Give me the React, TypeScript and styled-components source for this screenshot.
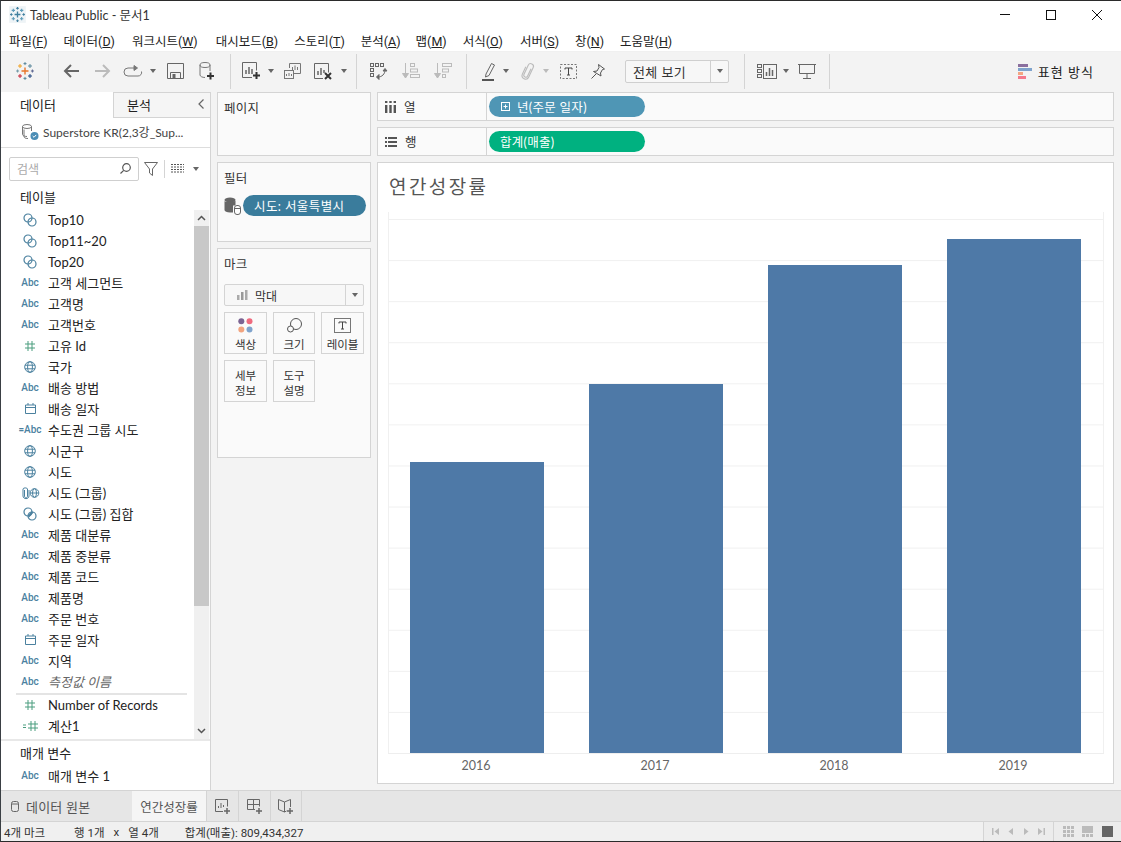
import React from "react";
import styled, { createGlobalStyle } from "styled-components";

const Global = createGlobalStyle`
  html, body { margin: 0; padding: 0; background: #f3f3f3; overflow: hidden; }
  body { font-family: Lato, "Noto Sans CJK KR", sans-serif; font-size: 13px; color: #222; }
  * { box-sizing: border-box; }
  #root { height: 100vh; }
`;

const Win = styled.div`
  height: 842px; width: 1121px; display: flex; flex-direction: column;
  border-top: 1px solid #2b2b2b; border-left: 1px solid #3a3f44; border-bottom: 1px solid #2b2b2b;
  background: #f3f3f3; overflow: hidden;
`;
const TitleBar = styled.div`
  height: 27px; flex: none; background: #fff; display: flex; align-items: center; padding-left: 9px; color: #333; font-size: 12.5px;
`;
const TitleText = styled.span` margin-left: 5px; `;
const WinButtons = styled.div` margin-left: auto; margin-right: 1px; display: flex; `;
const WinButton = styled.span` width: 46px; height: 27px; display: flex; align-items: center; justify-content: center; `;
const MenuBar = styled.div`
  height: 23px; flex: none; background: #fff; display: flex; align-items: center; font-family: Roboto, "Noto Sans CJK KR", sans-serif; font-size: 12.5px; color: #222; padding-top: 1px;
`;
const MenuItem = styled.span<{ $x: number }>` margin-left: ${p => p.$x}px; white-space: nowrap; `;
const ToolBar = styled.div`
  height: 39px; flex: none; background: #f3f3f3; display: flex; align-items: center; border-top: 1px solid #f0f0f0;
`;
const Tool = styled.span<{ $ml: number; $w: number }>`
  margin-left: ${p => p.$ml}px; width: ${p => p.$w}px; height: 24px; flex: none; display: flex; align-items: center; justify-content: center; color: #666;
`;
const ToolSep = styled.span<{ $ml: number }>`
  margin-left: ${p => p.$ml}px; width: 1px; height: 35px; background: #d4d4d4; flex: none;
`;
const Caret = styled.span<{ $ml?: number; $c?: string }>`
  margin-left: ${p => p.$ml ?? 0}px; flex: none; width: 0; height: 0; border-left: 3px solid transparent; border-right: 3px solid transparent;
  border-top: 4px solid ${p => p.$c ?? "#666"};
`;
const Combo = styled.div<{ $ml: number }>`
  margin-left: ${p => p.$ml}px; width: 104px; height: 23px; flex: none; background: #f7f7f7; border: 1px solid #cfcfcf; border-radius: 2px;
  display: flex; align-items: center; font-size: 13px; color: #333;
`;
const ComboText = styled.span` flex: 1; padding-left: 7px; letter-spacing: .4px; `;
const ComboArrow = styled.span`
  width: 18px; height: 100%; border-left: 1px solid #cfcfcf; display: flex; align-items: center; justify-content: center;
`;
const ShowMe = styled.div`
  margin-left: auto; margin-right: 27px; display: flex; align-items: center; gap: 6px; font-size: 13px; color: #222; letter-spacing: 1px;
`;

const Main = styled.div` height: 700px; flex: none; display: flex; min-height: 0; padding-top: 1px; `;
const DataPanel = styled.div`
  width: 210px; flex: none; background: #fff; border-right: 1px solid #d4d4d4; display: flex; flex-direction: column; margin-top: 1px;
`;
const PanelTabs = styled.div` height: 26px; flex: none; display: flex; font-size: 13px; `;
const DataTab = styled.div` width: 112px; padding: 0 0 1px 19px; display: flex; align-items: center; `;
const AnalysisTab = styled.div`
  flex: 1; background: #f5f5f5; border: 1px solid #d4d4d4; border-right: 0; padding: 0 6px 2px 13px; display: flex; align-items: center; justify-content: space-between;
`;
const SourceRow = styled.div`
  height: 30px; flex: none; border-bottom: 1px solid #ddd; display: flex; align-items: center; padding: 0 0 2px 20px; gap: 4px; color: #444; font-size: 12px; 
`;
const SearchRow = styled.div` height: 39px; flex: none; display: flex; align-items: center; padding: 2px 0 0 8px; `;
const SearchBox = styled.div`
  width: 130px; height: 24px; border: 1px solid #cfcfcf; border-radius: 2px; display: flex; align-items: center; justify-content: space-between;
  padding: 0 7px; color: #aaa; font-size: 12px;
`;
const SearchDivider = styled.span` width: 1px; height: 18px; background: #d4d4d4; margin: 0 6px; `;
const SectionHead = styled.div<{ $pb: number }>` height: 23px; flex: none; padding: 0 0 ${p => p.$pb}px 19px; font-size: 13px; color: #222; display: flex; align-items: center; `;
const ListWrap = styled.div` height: 531px; flex: none; display: flex; border-bottom: 2px solid #e8e8e8; `;
const List = styled.div` flex: 1; min-width: 0; `;
const Row = styled.div<{ $italic?: boolean }>`
  height: 21px; padding-bottom: 2px; display: flex; align-items: center; white-space: nowrap; font-size: 13px; color: ${p => (p.$italic ? "#666" : "#222")};
  font-style: ${p => (p.$italic ? "italic" : "normal")};
`;
const RowIcon = styled.span<{ $c?: string }>`
  width: 47px; flex: none; display: flex; align-items: center; justify-content: center; padding-left: 14px; padding-right: 3px; font-size: 10px; font-style: normal;
  color: ${p => p.$c ?? "#4b819f"}; font-family: Roboto, sans-serif; font-weight: 500;
`;
const ListDivider = styled.div` height: 2px; background: #e4e4e4; margin-left: 15px; margin-right: 7px; `;
const Scrollbar = styled.div` width: 16px; flex: none; background: #f0f0f0; display: flex; flex-direction: column; border-right: 1px solid #fafafa; `;
const ScrollBtn = styled.div` height: 16px; flex: none; display: flex; align-items: center; justify-content: center; color: #555; `;
const ScrollThumb = styled.div` height: 380px; background: #c8c8c8; flex: none; `;
const ScrollRest = styled.div` flex: 1; `;
const ParamRow = styled.div` padding-top: 2px; `;

const Middle = styled.div` width: 154px; margin-left: 6px; flex: none; display: flex; flex-direction: column; gap: 6px; padding-top: 1px; `;
const Card = styled.div<{ $h: number }>`
  height: ${p => p.$h}px; flex: none; background: #fafafa; border: 1px solid #d4d4d4; padding: 7px 6px; display: flex; flex-direction: column; font-size: 12.5px; color: #333;
`;
const CardTitle = styled.div` height: 18px; line-height: 18px; letter-spacing: .3px; `;
const FilterRow = styled.div` display: flex; align-items: center; gap: 2px; margin-top: 7px; `;
const FilterPill = styled.div`
  width: 123px; height: 21px; flex: none; border-radius: 11px; background: #3a7c9c; color: #fff; font-size: 12.5px; padding-left: 11px; display: flex; align-items: center; letter-spacing: .4px;
`;
const MarkSelect = styled.div`
  margin-top: 10px; width: 140px; height: 22px; border: 1px solid #d4d4d4; border-radius: 2px; background: #f7f7f7; display: flex; align-items: center; font-size: 12px;
`;
const MarkSelectLabel = styled.div` flex: 1; display: flex; align-items: center; gap: 7px; padding-left: 12px; `;
const MarkSelectArrow = styled.div` width: 18px; height: 100%; border-left: 1px solid #d4d4d4; display: flex; align-items: center; justify-content: center; `;
const MarkGrid = styled.div` display: grid; grid-template-columns: 43px 42px 43px; gap: 6px; margin-top: 6px; `;
const MarkBtn = styled.div`
  height: 42px; padding-top: 3px; background: #fafafa; border: 1px solid #d4d4d4; display: flex; flex-direction: column; align-items: center; justify-content: center; font-size: 11.5px; line-height: 15px; color: #333; text-align: center;
`;
const MarkIcon = styled.span` height: 18px; display: flex; align-items: center; justify-content: center; margin: -1px 0 3px; `;

const Right = styled.div` width: 737px; margin-left: 6px; flex: none; display: flex; flex-direction: column; padding-top: 1px; `;
const Shelf = styled.div`
  height: 29px; flex: none; background: #fafafa; border: 1px solid #d4d4d4; display: flex; margin-bottom: 6px;
`;
const ShelfLabel = styled.div`
  width: 109px; flex: none; border-right: 1px solid #d4d4d4; display: flex; align-items: center; gap: 8px; padding-left: 7px; font-size: 12.5px; color: #333;
`;
const Pill = styled.div<{ $bg: string; $pl: number }>`
  margin: 3px 0 0 2px; width: 156px; height: 21px; border-radius: 11px; background: ${p => p.$bg}; color: #fff; display: flex; align-items: center; gap: 7px;
  padding-left: ${p => p.$pl}px; font-size: 12.5px; letter-spacing: .3px;
`;
const ChartCard = styled.div`
  height: 622px; flex: none; background: #fff; border: 1px solid #d4d4d4; display: flex; flex-direction: column; padding: 0 9px 0 10px;
`;
const ChartTitle = styled.div` height: 49px; padding: 11px 0 0 1px; font-size: 19px; line-height: 26px; letter-spacing: 2.4px; color: #555; `;
const Plot = styled.div`
  height: 542px; flex: none; display: flex; border-bottom: 1px solid #eee; box-shadow: inset 1px 0 #f0f0f0, inset -1px 0 #f0f0f0;
  background-image: linear-gradient(to bottom, #f0f0f0 0, #f0f0f0 1px, transparent 1px);
  background-size: 100% 41.08px;
  background-position: 0 7px;
`;
const BarSlot = styled.div` flex: 1; padding-right: 2px; display: flex; align-items: flex-end; justify-content: center; `;
const Bar = styled.div<{ $h: number }>` width: 134px; height: ${p => p.$h}px; background: #4e79a7; `;
const Axis = styled.div` display: flex; height: 20px; `;
const AxisLabel = styled.div` flex: 1; padding-right: 3px; text-align: center; color: #666; font-size: 12.5px; line-height: 23px; `;

const TabBar = styled.div` height: 31px; flex: none; background: #e6e6e6; border-top: 1px solid #d4d4d4; display: flex; color: #555; font-size: 13px; `;
const SourceTab = styled.div` width: 131px; display: flex; align-items: center; gap: 7px; padding-left: 10px; letter-spacing: .2px; `;
const SheetTab = styled.div` width: 74px; background: #f5f5f5; display: flex; align-items: center; justify-content: center; font-size: 12.5px; `;
const AddTab = styled.div` width: 32px; border-left: 1px solid #d4d4d4; display: flex; align-items: center; justify-content: center; color: #666; &:last-child { border-right: 1px solid #d4d4d4; } `;
const StatusBar = styled.div` flex: 1; min-height: 0; background: #f0f0f0; border-top: 1px solid #d4d4d4; display: flex; align-items: center; font-family: Roboto, "Noto Sans CJK KR", sans-serif; font-size: 11.5px; color: #333; `;
const StatusItem = styled.span<{ $ml: number }>` margin-left: ${p => p.$ml}px; white-space: nowrap; `;
const NavGroup = styled.div<{ $ml?: boolean; $w: number }>`
  ${p => (p.$ml ? "margin-left: auto;" : "")} width: ${p => p.$w}px; height: 100%; border-left: 1px solid #d4d4d4; display: flex; align-items: center; justify-content: space-evenly; background: #ececec;
`;

const Svg = styled.svg` display: block; flex: none; overflow: visible; `;

const Cross: React.FC<{ x: number; y: number; s: number; c: string; w?: number }> = ({ x, y, s, c, w = 1 }) => (
  <path d={`M${x - s} ${y}H${x + s}M${x} ${y - s}V${y + s}`} stroke={c} strokeWidth={w} fill="none" />
);
const TableauLogo = () => (
  <Svg width="18" height="18" viewBox="0 0 18 18">
    <Cross x={9} y={9} s={3.5} c="#e8762b" w={1.4} />
    <Cross x={4} y={4} s={2} c="#f0a020" />
    <Cross x={14} y={4} s={2} c="#5b879b" />
    <Cross x={4} y={14} s={2} c="#c72035" />
    <Cross x={14} y={14} s={2} c="#1f457e" />
    <Cross x={9} y={1.6} s={1.5} c="#5b879b" />
    <Cross x={9} y={16.4} s={1.5} c="#59879b" />
    <Cross x={1.6} y={9} s={1.5} c="#7099a6" />
    <Cross x={16.4} y={9} s={1.5} c="#5b6591" />
  </Svg>
);
const TitleLogo = () => (
  <Svg width="15" height="15" viewBox="0 0 18 18">
    <rect x="-1" y="-1" width="20" height="20" fill="#eef3f6" />
    <Cross x={9} y={9} s={3.5} c="#3f7f9e" w={1.6} />
    <Cross x={4} y={4} s={2} c="#5b9ab8" w={1.3} />
    <Cross x={14} y={4} s={2} c="#5b9ab8" w={1.3} />
    <Cross x={4} y={14} s={2} c="#5b9ab8" w={1.3} />
    <Cross x={14} y={14} s={2} c="#5b9ab8" w={1.3} />
    <Cross x={9} y={1.6} s={1.5} c="#3f7f9e" w={1.3} />
    <Cross x={9} y={16.4} s={1.5} c="#3f7f9e" w={1.3} />
    <Cross x={1.6} y={9} s={1.5} c="#3f7f9e" w={1.3} />
    <Cross x={16.4} y={9} s={1.5} c="#3f7f9e" w={1.3} />
  </Svg>
);
const Plus = ({ x, y }: { x: number; y: number }) => (
  <path d={`M${x - 3.5} ${y}H${x + 3.5}M${x} ${y - 3.5}V${y + 3.5}`} stroke="#333" strokeWidth="2" fill="none" />
);
const ArrowLeft = ({ c }: { c: string }) => (
  <Svg width="16" height="14" viewBox="0 0 16 14" fill="none" stroke={c} strokeWidth="2"><path d="M16 7H2M8 1L2 7l6 6" /></Svg>
);
const ArrowRight = ({ c }: { c: string }) => (
  <Svg width="16" height="14" viewBox="0 0 16 14" fill="none" stroke={c} strokeWidth="2"><path d="M0 7h14M8 1l6 6-6 6" /></Svg>
);
const Redo = () => (
  <Svg width="18" height="12" viewBox="0 0 18 12" fill="none" stroke="#777" strokeWidth="1"><path d="M11 3H4a3.5 3.5 0 0 0 0 8h10a3.5 3.5 0 0 0 3.5-4.5" /><path d="M10 0.500l3.500 2.500-3.500 2.500z" fill="#777" /></Svg>
);
const Save = () => (
  <Svg width="17" height="16" viewBox="0 0 17 16" fill="none" stroke="#666" strokeWidth="1"><path d="M.5.500h16v15H.5zM3.500 15V9.500h10V15" /><rect x="5.500" y="11" width="3" height="4" fill="#666" stroke="none" /></Svg>
);
const NewData = () => (
  <Svg width="16" height="18" viewBox="0 0 16 18" fill="none" stroke="#777" strokeWidth="1">
    <ellipse cx="6" cy="3" rx="5" ry="2.500" /><path d="M1 3v10c0 1.400 2.500 2.500 5 2.500M11 3v6" /><Plus x={11.5} y={14} />
  </Svg>
);
const NewSheet = () => (
  <Svg width="19" height="18" viewBox="0 0 19 18" fill="none" stroke="#666" strokeWidth="1">
    <path d="M10 15.500H.5V.5h14v8" /><path d="M4 12V8M7 12V5M10 12V7" strokeWidth="1.500" /><Plus x={14.500} y={13.500} />
  </Svg>
);
const Duplicate = () => (
  <Svg width="17" height="16" viewBox="0 0 17 16" fill="none" stroke="#777" strokeWidth="1">
    <path d="M5.500 5V.5h11v10H10" /><rect x=".5" y="7.500" width="9" height="8" /><path d="M8.500 7V4M11 7V2.500M13.500 7V4M2.500 13v-2M5 13v-3M7.500 13v-2" />
  </Svg>
);
const ClearSheet = () => (
  <Svg width="20" height="17" viewBox="0 0 20 17" fill="none" stroke="#666" strokeWidth="1">
    <path d="M9 15.500H.5V.5h14v9" /><path d="M4 12V8M7 12V5M10 10V7" strokeWidth="1.500" /><path d="M11 10l6 6M17 10l-6 6" stroke="#333" strokeWidth="2" />
  </Svg>
);
const Swap = () => (
  <Svg width="18" height="17" viewBox="0 0 18 17" fill="none" stroke="#666" strokeWidth="1">
    <rect x=".5" y=".5" width="3" height="3" /><rect x="5.500" y=".5" width="3" height="3" /><rect x="10.500" y=".5" width="3" height="3" />
    <rect x=".5" y="5.500" width="3" height="3" /><rect x=".5" y="10.500" width="3" height="3" />
    <path d="M15 7c0 4-3 7-7 7" /><path d="M13 8l2-2.500 2 2.500z" fill="#666" /><path d="M9 11.500L6.500 14 9 16.500z" fill="#666" />
  </Svg>
);
const SortAsc = ({ flip }: { flip?: boolean }) => (
  <Svg width="18" height="16" viewBox="0 0 18 16" fill="none" stroke="#bbb" strokeWidth="1">
    <path d="M3.500 0v11" /><path d="M.5 10.500h6l-3 4.500z" fill="#bbb" />
    {flip ? (
      <><rect x="8.500" y=".5" width="9" height="3" /><rect x="8.500" y="6" width="6" height="3" /><rect x="8.500" y="11.500" width="3" height="3" /></>
    ) : (
      <><rect x="8.500" y=".5" width="4" height="3" /><rect x="8.500" y="6" width="7" height="3" /><rect x="8.500" y="11.500" width="9" height="3" /></>
    )}
  </Svg>
);
const Highlight = () => (
  <Svg width="13" height="19" viewBox="0 0 13 19" fill="none" stroke="#666" strokeWidth="1">
    <path d="M4 12L9.500 1.500l3 1.500L7 13.500 3.500 15z" /><path d="M0 18h12" strokeWidth="2" stroke="#555" />
  </Svg>
);
const Clip = () => (
  <Svg width="13" height="17" viewBox="0 0 13 17" fill="none" stroke="#bbb" strokeWidth="1.100">
    <g transform="rotate(25 6.500 8.500)"><path d="M8.500 4.500v8a2 2 0 0 1-4 0V2.500a2.700 2.700 0 0 1 5.500 0v10.500a3.500 3.500 0 0 1-7 0V5" /></g>
  </Svg>
);
const TextBox = ({ dashed }: { dashed?: boolean }) => (
  <Svg width="17" height="15" viewBox="0 0 17 15" fill="none" stroke="#777" strokeWidth="1">
    <rect x=".5" y=".5" width="16" height="14" strokeDasharray={dashed ? "2 1.500" : undefined} />
    <path d="M5 4h7M8.500 4v7M7 11h3M5 4v1.500M12 4v1.500" stroke="#444" />
  </Svg>
);
const Pin = () => (
  <Svg width="14" height="15" viewBox="0 0 14 15" fill="none" stroke="#555" strokeWidth="1"><path d="M7.500 .5l6 4.500-2 .5-2 3.500.5 3L2.500 7.500 6 7l2-3.500zM5 10L.5 14.500" /></Svg>
);
const ShowIcon = () => (
  <Svg width="20" height="15" viewBox="0 0 20 15" fill="none" stroke="#666" strokeWidth="1">
    <rect x=".5" y=".5" width="4" height="3" /><rect x=".5" y="5.500" width="4" height="3" /><rect x=".5" y="10.500" width="4" height="3" />
    <rect x="6.500" y=".5" width="13" height="14" /><path d="M9.500 12V8M12.500 12V4M15.500 12V6" strokeWidth="1.500" />
  </Svg>
);
const Present = () => (
  <Svg width="18" height="16" viewBox="0 0 18 16" fill="none" stroke="#666" strokeWidth="1"><path d="M0 1.500h18M1.500 1.500v9h15v-9M9 10.500v4.500M5 15.500h8" /></Svg>
);
const ShowBars = () => (
  <Svg width="14" height="15" viewBox="0 0 14 15">
    <rect x="0" y="0" width="10" height="3" fill="#8a6f9e" /><rect x="0" y="4" width="14" height="3" fill="#7fa3cc" />
    <rect x="0" y="8" width="5" height="3" fill="#f4a582" /><rect x="0" y="12" width="8" height="3" fill="#f47a8c" />
  </Svg>
);
const SetIcon = ({ half }: { half?: boolean }) => (
  <Svg width="14" height="14" viewBox="0 0 14 14" fill="none" stroke="#4b819f" strokeWidth="1.200">
    <circle cx="5" cy="5" r="4" /><circle cx="9" cy="9" r="4" />
    {half && <path d="M5.500 9.500l4-4.500" strokeWidth="2" />}
  </Svg>
);
const Globe = () => (
  <Svg width="12" height="12" viewBox="0 0 12 12" fill="none" stroke="#4b819f" strokeWidth="1">
    <circle cx="6" cy="6" r="5.300" /><ellipse cx="6" cy="6" rx="2.400" ry="5.300" /><path d="M1 4.200h10M1 7.800h10" />
  </Svg>
);
const Calendar = () => (
  <Svg width="11" height="11" viewBox="0 0 11 11" fill="none" stroke="#4b819f" strokeWidth="1">
    <path d="M.5 2h10v8.500H.5zM.5 4.500h10M3 0v2M8 0v2" />
  </Svg>
);
const ClipGlobe = () => (
  <Svg width="17" height="12" viewBox="0 0 17 12" fill="none" stroke="#4b819f" strokeWidth="1">
    <path d="M2.500 3v6c0 2.500 3 2.500 3 0V2C5.500.5 1 .5 1 2v7c0 3.500 6 3.500 6 0V3" /><circle cx="12.500" cy="6" r="4.300" /><ellipse cx="12.500" cy="6" rx="2" ry="4.300" /><path d="M8.500 6h8" />
  </Svg>
);
const Hash = ({ eq }: { eq?: boolean }) => (
  <Svg width={eq ? 15 : 10} height="10" viewBox={eq ? "-5 0 15 10" : "0 0 10 10"} fill="none" stroke="#4a9d7f" strokeWidth="1">
    <path d="M3 0v10M7 0v10M0 3h10M0 7h10" />
    {eq && <path d="M-5 4h3M-5 6.500h3" />}
  </Svg>
);
const DbLink = () => (
  <Svg width="17" height="18" viewBox="0 0 17 18">
    <ellipse cx="6" cy="3" rx="5.500" ry="2.500" fill="#666" /><path d="M.5 4v9c0 1.500 2.500 2.500 5.500 2.500V4.500C3.500 5.500 1.500 5 .5 4zM6 4.500l5.500-.5v4.500H9V15.500H6z" fill="#666" />
    <g fill="#fff" stroke="#666"><rect x="10.500" y="8.500" width="6" height="9" rx="2.500" /><path d="M10.500 11.500h6" fill="none" /></g>
  </Svg>
);
const SourceIcon = () => (
  <Svg width="18" height="18" viewBox="0 0 18 18" fill="none" stroke="#777" strokeWidth="1">
    <ellipse cx="6" cy="3.500" rx="4.500" ry="2" /><path d="M1.500 3.500v8c0 1 2 2 4.500 2M10.500 3.500V8" /><path d="M3 6.500v7c0 1 1 2 4 2" />
    <circle cx="13.500" cy="13" r="4" fill="#4b8db5" stroke="none" /><path d="M11.700 13l1.300 1.300 2.200-2.400" stroke="#fff" />
  </Svg>
);
const Search = () => (
  <Svg width="11" height="11" viewBox="0 0 11 11" fill="none" stroke="#555" strokeWidth="1.200"><circle cx="6.500" cy="4.500" r="3.800" /><path d="M3.700 7.300L.5 10.500" /></Svg>
);
const Funnel = () => (
  <Svg width="14" height="14" viewBox="0 0 14 14" fill="none" stroke="#666" strokeWidth="1"><path d="M.5.500h13L8.500 7v6.500L5.500 11V7z" /></Svg>
);
const ListGrid = () => (
  <Svg width="13" height="9" viewBox="0 0 13 9" fill="none" stroke="#555" strokeWidth="1"><path d="M0 .5h13M0 3h13M0 5.500h13M0 8h13" strokeDasharray="2 1" /></Svg>
);
const MiniBars = () => (
  <Svg width="11" height="10" viewBox="0 0 11 10" fill="#aaa"><rect x="0" y="5" width="2.500" height="5" /><rect x="4" y="2" width="2.500" height="8" fill="#999" /><rect x="8" y="0" width="2.500" height="10" /></Svg>
);
const ColorDots = () => (
  <Svg width="15" height="15" viewBox="0 0 15 15">
    <circle cx="3.300" cy="3.300" r="3" fill="#7b6392" /><circle cx="11.500" cy="3.300" r="3" fill="#ef6a7e" />
    <circle cx="3.300" cy="11.500" r="3" fill="#f2a47f" /><circle cx="11.500" cy="11.500" r="3" fill="#7fa3cc" />
  </Svg>
);
const SizeIcon = () => (
  <Svg width="15" height="15" viewBox="0 0 15 15" fill="none" stroke="#555" strokeWidth="1"><circle cx="9" cy="6" r="5.500" /><circle cx="3.500" cy="11" r="3" fill="#fafafa" /></Svg>
);
const ColsIcon = () => (
  <Svg width="11" height="12" viewBox="0 0 11 12" fill="#555"><rect x="0" y="4" width="2.400" height="8" /><rect x="4.300" y="4" width="2.400" height="8" /><rect x="8.600" y="4" width="2.400" height="8" /><rect x="0" y="0" width="2.400" height="2" /><rect x="4.300" y="0" width="2.400" height="2" /><rect x="8.600" y="0" width="2.400" height="2" /></Svg>
);
const RowsIcon = () => (
  <Svg width="12" height="10" viewBox="0 0 12 10" fill="#555"><rect x="3" y="0" width="9" height="2" /><rect x="3" y="4" width="9" height="2" /><rect x="3" y="8" width="9" height="2" /><rect x="0" y="0" width="2" height="2" /><rect x="0" y="4" width="2" height="2" /><rect x="0" y="8" width="2" height="2" /></Svg>
);
const PlusBox = () => (
  <Svg width="9" height="9" viewBox="0 0 9 9" fill="none" stroke="#fff" strokeWidth="1"><rect x=".5" y=".5" width="8" height="8" /><path d="M2.500 4.500h4M4.500 2.500v4" /></Svg>
);
const Cyl = () => (
  <Svg width="8" height="11" viewBox="0 0 8 11" fill="none" stroke="#666" strokeWidth="1"><rect x=".5" y=".5" width="7" height="10" rx="2" /><path d="M.5 3h7" /></Svg>
);
const AddSheet = () => (
  <Svg width="16" height="15" viewBox="0 0 16 15" fill="none" stroke="#666" strokeWidth="1">
    <path d="M8 12.500H.5V.5h12v7" /><path d="M3.500 9V7M6 9V4M8.500 8V6" /><path d="M9 12h6M12 9v6" strokeWidth="1.500" />
  </Svg>
);
const AddDash = () => (
  <Svg width="16" height="15" viewBox="0 0 16 15" fill="none" stroke="#666" strokeWidth="1">
    <path d="M8 10.500H.5V.5h12v7M.5 5.500h12M6.500.5v10" /><path d="M9 12h6M12 9v6" strokeWidth="1.500" />
  </Svg>
);
const AddStory = () => (
  <Svg width="16" height="15" viewBox="0 0 16 15" fill="none" stroke="#666" strokeWidth="1">
    <path d="M6.500 3L.5.500v10l6 2.500 2-1M6.500 3l6-2.500V8M6.500 3v10" /><path d="M9 12h6M12 9v6" strokeWidth="1.500" />
  </Svg>
);
const Chev = ({ up }: { up?: boolean }) => (
  <Svg width="9" height="6" viewBox="0 0 9 6" fill="none" stroke="#555" strokeWidth="1.500"><path d={up ? "M1 5l3.500-3.500L8 5" : "M1 1l3.500 3.500L8 1"} /></Svg>
);
const NavIcon = ({ d }: { d: string }) => (
  <Svg width="7" height="7" viewBox="0 0 7 7" fill="#bbb"><path d={d} /></Svg>
);
const ViewIcon = ({ n }: { n: number }) => (
  <Svg width="11" height="11" viewBox="0 0 11 11" fill={n === 2 ? "#666" : "#bbb"}>
    {n === 0 && [0, 4, 8].flatMap(x => [0, 4, 8].map(y => <rect key={`${x}${y}`} x={x} y={y} width="3" height="3" />))}
    {n === 1 && <><rect width="11" height="7" /><rect y="8" width="3" height="3" /><rect x="4" y="8" width="3" height="3" /><rect x="8" y="8" width="3" height="3" /></>}
    {n === 2 && <rect width="11" height="11" />}
  </Svg>
);

type Kind = "set" | "setHalf" | "abc" | "eqAbc" | "globe" | "hash" | "eqHash" | "cal" | "clip";
const FieldIcon = ({ k }: { k: Kind }) => {
  switch (k) {
    case "set": return <RowIcon><SetIcon /></RowIcon>;
    case "setHalf": return <RowIcon><SetIcon half /></RowIcon>;
    case "abc": return <RowIcon>Abc</RowIcon>;
    case "eqAbc": return <RowIcon>=Abc</RowIcon>;
    case "globe": return <RowIcon><Globe /></RowIcon>;
    case "cal": return <RowIcon><Calendar /></RowIcon>;
    case "clip": return <RowIcon><ClipGlobe /></RowIcon>;
    case "hash": return <RowIcon><Hash /></RowIcon>;
    case "eqHash": return <RowIcon><Hash eq /></RowIcon>;
  }
};

const dims: [Kind, string, boolean?][] = [
  ["set", "Top10"], ["set", "Top11~20"], ["set", "Top20"], ["abc", "고객 세그먼트"], ["abc", "고객명"], ["abc", "고객번호"],
  ["hash", "고유 Id"], ["globe", "국가"], ["abc", "배송 방법"], ["cal", "배송 일자"], ["eqAbc", "수도권 그룹 시도"], ["globe", "시군구"],
  ["globe", "시도"], ["clip", "시도 (그룹)"], ["setHalf", "시도 (그룹) 집합"], ["abc", "제품 대분류"], ["abc", "제품 중분류"], ["abc", "제품 코드"],
  ["abc", "제품명"], ["abc", "주문 번호"], ["cal", "주문 일자"], ["abc", "지역"], ["abc", "측정값 이름", true],
];
const menus: [string, string, number][] = [
  ["파일", "F", 8], ["데이터", "D", 16], ["워크시트", "W", 17], ["대시보드", "B", 18], ["스토리", "T", 16], ["분석", "A", 16],
  ["맵", "M", 15], ["서식", "O", 16], ["서버", "S", 17], ["창", "N", 16], ["도움말", "H", 16],
];
const bars = [291, 369, 488, 514];
const years = ["2016", "2017", "2018", "2019"];

export default function App() {
  return (
    <Win>
      <Global />
      <TitleBar>
        <TitleLogo />
        <TitleText>Tableau Public - 문서1</TitleText>
        <WinButtons>
          <WinButton><Svg width="10" height="1"><rect width="10" height="1" fill="#111" /></Svg></WinButton>
          <WinButton><Svg width="10" height="10" fill="none" stroke="#111"><rect x=".5" y=".5" width="9" height="9" /></Svg></WinButton>
          <WinButton><Svg width="10" height="10" fill="none" stroke="#111"><path d="M0 0l10 10M10 0L0 10" /></Svg></WinButton>
        </WinButtons>
      </TitleBar>
      <MenuBar>
        {menus.map(([t, k, x]) => <MenuItem key={k} $x={x}>{t}(<u>{k}</u>)</MenuItem>)}
      </MenuBar>
      <ToolBar>
        <Tool $ml={15} $w={18}><TableauLogo /></Tool>
        <ToolSep $ml={14} />
        <Tool $ml={14} $w={16}><ArrowLeft c="#666" /></Tool>
        <Tool $ml={16} $w={16}><ArrowRight c="#bbb" /></Tool>
        <Tool $ml={13} $w={18}><Redo /></Tool>
        <Caret $ml={8} />
        <Tool $ml={11} $w={17}><Save /></Tool>
        <Tool $ml={15} $w={16}><NewData /></Tool>
        <ToolSep $ml={15} />
        <Tool $ml={11} $w={19}><NewSheet /></Tool>
        <Caret $ml={7} />
        <Tool $ml={10} $w={17}><Duplicate /></Tool>
        <Tool $ml={13} $w={20}><ClearSheet /></Tool>
        <Caret $ml={7} />
        <ToolSep $ml={9} />
        <Tool $ml={13} $w={18}><Swap /></Tool>
        <Tool $ml={14} $w={18}><SortAsc /></Tool>
        <Tool $ml={14} $w={18}><SortAsc flip /></Tool>
        <ToolSep $ml={14} />
        <Tool $ml={15} $w={13}><Highlight /></Tool>
        <Caret $ml={8} />
        <Tool $ml={12} $w={13}><Clip /></Tool>
        <Caret $ml={9} $c="#bbb" />
        <Tool $ml={11} $w={17}><TextBox dashed /></Tool>
        <Tool $ml={14} $w={14}><Pin /></Tool>
        <Combo $ml={20}>
          <ComboText>전체 보기</ComboText>
          <ComboArrow><Caret /></ComboArrow>
        </Combo>
        <ToolSep $ml={15} />
        <Tool $ml={12} $w={20}><ShowIcon /></Tool>
        <Caret $ml={6} />
        <Tool $ml={9} $w={18}><Present /></Tool>
        <ToolSep $ml={13} />
        <ShowMe><ShowBars />표현 방식</ShowMe>
      </ToolBar>
      <Main>
        <DataPanel>
          <PanelTabs>
            <DataTab>데이터</DataTab>
            <AnalysisTab>분석<Svg width="6" height="10" fill="none" stroke="#666" strokeWidth="1.200"><path d="M5.500 .5L1 5l4.500 4.500" /></Svg></AnalysisTab>
          </PanelTabs>
          <SourceRow><SourceIcon />Superstore KR(2,3강_Sup...</SourceRow>
          <SearchRow>
            <SearchBox>검색<Search /></SearchBox>
            <Svg width="5" height="1" />
            <Funnel />
            <SearchDivider />
            <ListGrid />
            <Caret $ml={9} />
          </SearchRow>
          <SectionHead $pb={5}>테이블</SectionHead>
          <ListWrap>
            <List>
              {dims.map(([k, t, it]) => <Row key={t} $italic={it}><FieldIcon k={k} />{t}</Row>)}
              <ListDivider />
              <Row><FieldIcon k="hash" />Number of Records</Row>
              <Row><FieldIcon k="eqHash" />계산1</Row>
            </List>
            <Scrollbar>
              <ScrollBtn><Chev up /></ScrollBtn>
              <ScrollThumb />
              <ScrollRest />
              <ScrollBtn><Chev /></ScrollBtn>
            </Scrollbar>
          </ListWrap>
          <SectionHead $pb={0}>매개 변수</SectionHead>
          <ParamRow><Row><FieldIcon k="abc" />매개 변수 1</Row></ParamRow>
        </DataPanel>
        <Middle>
          <Card $h={64}><CardTitle>페이지</CardTitle></Card>
          <Card $h={80}>
            <CardTitle>필터</CardTitle>
            <FilterRow><DbLink /><FilterPill>시도: 서울특별시</FilterPill></FilterRow>
          </Card>
          <Card $h={210}>
            <CardTitle>마크</CardTitle>
            <MarkSelect>
              <MarkSelectLabel><MiniBars />막대</MarkSelectLabel>
              <MarkSelectArrow><Caret /></MarkSelectArrow>
            </MarkSelect>
            <MarkGrid>
              <MarkBtn><MarkIcon><ColorDots /></MarkIcon>색상</MarkBtn>
              <MarkBtn><MarkIcon><SizeIcon /></MarkIcon>크기</MarkBtn>
              <MarkBtn><MarkIcon><TextBox /></MarkIcon>레이블</MarkBtn>
              <MarkBtn>세부<br />정보</MarkBtn>
              <MarkBtn>도구<br />설명</MarkBtn>
            </MarkGrid>
          </Card>
        </Middle>
        <Right>
          <Shelf>
            <ShelfLabel><ColsIcon />열</ShelfLabel>
            <Pill $bg="#4f96b5" $pl={12}><PlusBox />년(주문 일자)</Pill>
          </Shelf>
          <Shelf>
            <ShelfLabel><RowsIcon />행</ShelfLabel>
            <Pill $bg="#00b180" $pl={11}>합계(매출)</Pill>
          </Shelf>
          <ChartCard>
            <ChartTitle>연간성장률</ChartTitle>
            <Plot>
              {bars.map((h, i) => <BarSlot key={years[i]}><Bar $h={h} /></BarSlot>)}
            </Plot>
            <Axis>{years.map(y => <AxisLabel key={y}>{y}</AxisLabel>)}</Axis>
          </ChartCard>
        </Right>
      </Main>
      <TabBar>
        <SourceTab><Cyl />데이터 원본</SourceTab>
        <SheetTab>연간성장률</SheetTab>
        <AddTab><AddSheet /></AddTab>
        <AddTab><AddDash /></AddTab>
        <AddTab><AddStory /></AddTab>
      </TabBar>
      <StatusBar>
        <StatusItem $ml={3}>4개 마크</StatusItem>
        <StatusItem $ml={29}>행 1개</StatusItem>
        <StatusItem $ml={9}>x</StatusItem>
        <StatusItem $ml={9}>열 4개</StatusItem>
        <StatusItem $ml={26}>합계(매출): 809,434,327</StatusItem>
        <NavGroup $ml $w={70}>
          <NavIcon d="M0 0h1.500v7H0zM7 0v7L2.500 3.500z" />
          <NavIcon d="M6 0v7L1.500 3.500z" />
          <NavIcon d="M1 0v7l4.500-3.500z" />
          <NavIcon d="M0 0v7l4.500-3.500zM5.500 0H7v7H5.500z" />
        </NavGroup>
        <NavGroup $w={68}>
          <ViewIcon n={0} /><ViewIcon n={1} /><ViewIcon n={2} />
        </NavGroup>
      </StatusBar>
    </Win>
  );
}
